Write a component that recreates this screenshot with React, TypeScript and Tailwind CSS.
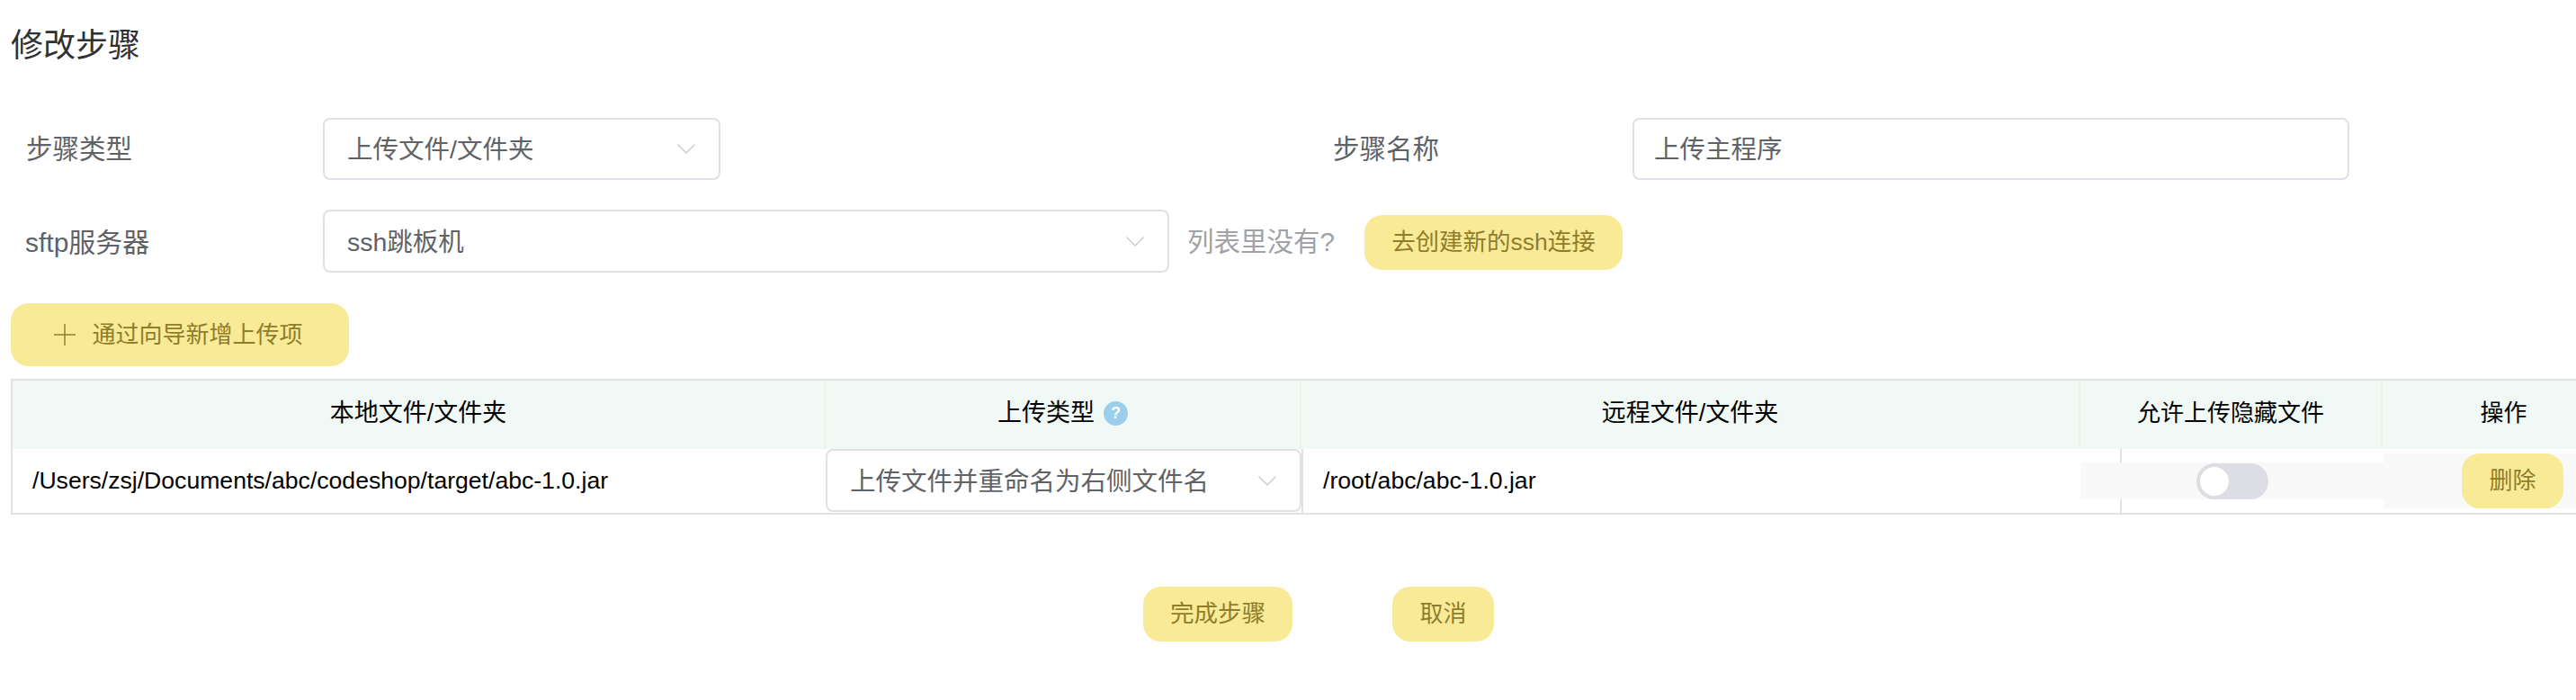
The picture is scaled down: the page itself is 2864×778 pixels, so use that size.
import React from 'react';

const FONT = "font-['Helvetica_Neue','Liberation_Sans','Noto_Sans_CJK_SC',sans-serif]";

const Chevron = ({ className }: { className?: string }) => (
	<svg viewBox="0 0 20 11" fill="none" className={className}>
		<polyline points="0.5,0.5 10,10 19.5,0.5" stroke="#c7cad1" strokeWidth="1.4" />
	</svg>
);

const Select = ({ value, className }: { value: string; className?: string }) => (
	<div
		className={`flex items-center justify-between rounded-lg border-2 border-[#e0e1e7] bg-white pl-[25px] pr-[26px] text-[28.5px] text-[#606266] ${className}`}
	>
		<span className="pt-[2px]">{value}</span>
		<Chevron className="h-[11px] w-[20px]" />
	</div>
);

const YellowButton = ({ children, className }: { children: React.ReactNode; className?: string }) => (
	<div
		className={`flex items-center justify-center rounded-[20px] bg-[#f8ea96] text-[#8f7d2c] ${className}`}
	>
		{children}
	</div>
);

const HeaderCell = ({ children, className }: { children: React.ReactNode; className?: string }) => (
	<div className={`flex items-center justify-center border-r-2 border-[#f3f1e4] pb-[4px] text-black ${className}`}>
		{children}
	</div>
);

export default function App() {
	return (
		<div className={`min-h-[778px] w-[2864px] overflow-hidden bg-white pl-[12px] pt-[29px] ${FONT}`}>
			<h2 className="h-[44px] text-[36px] leading-[44px] text-[#303133]">修改步骤</h2>

			<div className="mt-[58px] flex h-[69px] items-center">
				<label className="w-[347px] pl-[17px] pt-[2px] text-[29.5px] text-[#606266]">步骤类型</label>
				<Select value="上传文件/文件夹" className="h-[69px] w-[442px]" />
				<label className="ml-[681px] w-[333px] pt-[2px] text-[29.5px] text-[#606266]">步骤名称</label>
				<div className="flex h-[69px] w-[797px] items-center rounded-lg border-2 border-[#e0e1e7] pl-[22px] pt-[2px] text-[28.5px] text-[#606266]">
					上传主程序
				</div>
			</div>

			<div className="mt-[33px] flex h-[70px] items-center">
				<label className="w-[347px] pl-[16px] pt-[2px] text-[30px] text-[#606266]">sftp服务器</label>
				<Select value="ssh跳板机" className="h-[70px] w-[941px]" />
				<span className="ml-[20px] w-[197px] pt-[2px] text-[29.5px] text-[#a0a2a7]">列表里没有?</span>
				<YellowButton className="mt-[3px] h-[61px] w-[287px] text-[26.5px]">去创建新的ssh连接</YellowButton>
			</div>

			<YellowButton className="mt-[34px] h-[70px] w-[376px] text-[26px]">
				<svg viewBox="0 0 24 24" className="mr-[18px] ml-[-3px] h-[24px] w-[24px]" fill="none">
					<path d="M12 0v24M0 12h24" stroke="#8f7d2c" strokeWidth="1.5" />
				</svg>
				通过向导新增上传项
			</YellowButton>

			<div className="mt-[14px] border-l-[2px] border-t-[2px] border-b-[2px] border-[#e2e2e2]">
				<div className="flex h-[76px] bg-[#f0f9f5]">
					<HeaderCell className="w-[904px] text-[27px]">本地文件/文件夹</HeaderCell>
					<HeaderCell className="w-[529px] text-[27px]">
						上传类型
						<span className="ml-[10px] flex h-[27px] w-[27px] items-center justify-center rounded-full bg-[#9bcdec] text-[18px] font-bold text-white">
							?
						</span>
					</HeaderCell>
					<HeaderCell className="w-[866px] text-[27px]">远程文件/文件夹</HeaderCell>
					<HeaderCell className="w-[336px] text-[26px]">允许上传隐藏文件</HeaderCell>
					<div className="flex flex-1 items-center justify-center pb-[4px] pl-[54px] text-[26px] text-black">操作</div>
				</div>
				<div className="flex h-[71px] text-[26.6px] text-black">
					<div className="flex w-[904px] items-center pl-[22px]">/Users/zsj/Documents/abc/codeshop/target/abc-1.0.jar</div>
					<div className="w-[529px]">
						<Select value="上传文件并重命名为右侧文件名" className="h-[70px] w-full" />
					</div>
					<div className="flex w-[866px] items-center border-l-2 border-[#e2e2e2] pl-[22px]">/root/abc/abc-1.0.jar</div>
					<div className="relative flex w-[337px] items-center justify-center">
						<div className="absolute inset-y-0 left-[44px] w-[2px] bg-[#e2e2e2]" />
						<div className="relative flex h-[41px] w-full items-center justify-center bg-[#f9f9f9]">
							<div className="flex h-[40px] w-[80px] items-center rounded-full bg-[#dddee4] pl-[4px]">
								<div className="h-[32px] w-[32px] rounded-full bg-white" />
							</div>
						</div>
					</div>
					<div className="flex h-[61px] flex-1 items-center justify-end self-center bg-[#f9f9f9] pr-[14px]">
						<YellowButton className="h-[61px] w-[113px] text-[26px]">删除</YellowButton>
					</div>
				</div>
			</div>

			<div className="ml-[1259px] mt-[80px] flex gap-[111px]">
				<YellowButton className="h-[61px] w-[166px] text-[26.5px]">完成步骤</YellowButton>
				<YellowButton className="h-[61px] w-[113px] text-[26px]">取消</YellowButton>
			</div>
		</div>
	);
}
